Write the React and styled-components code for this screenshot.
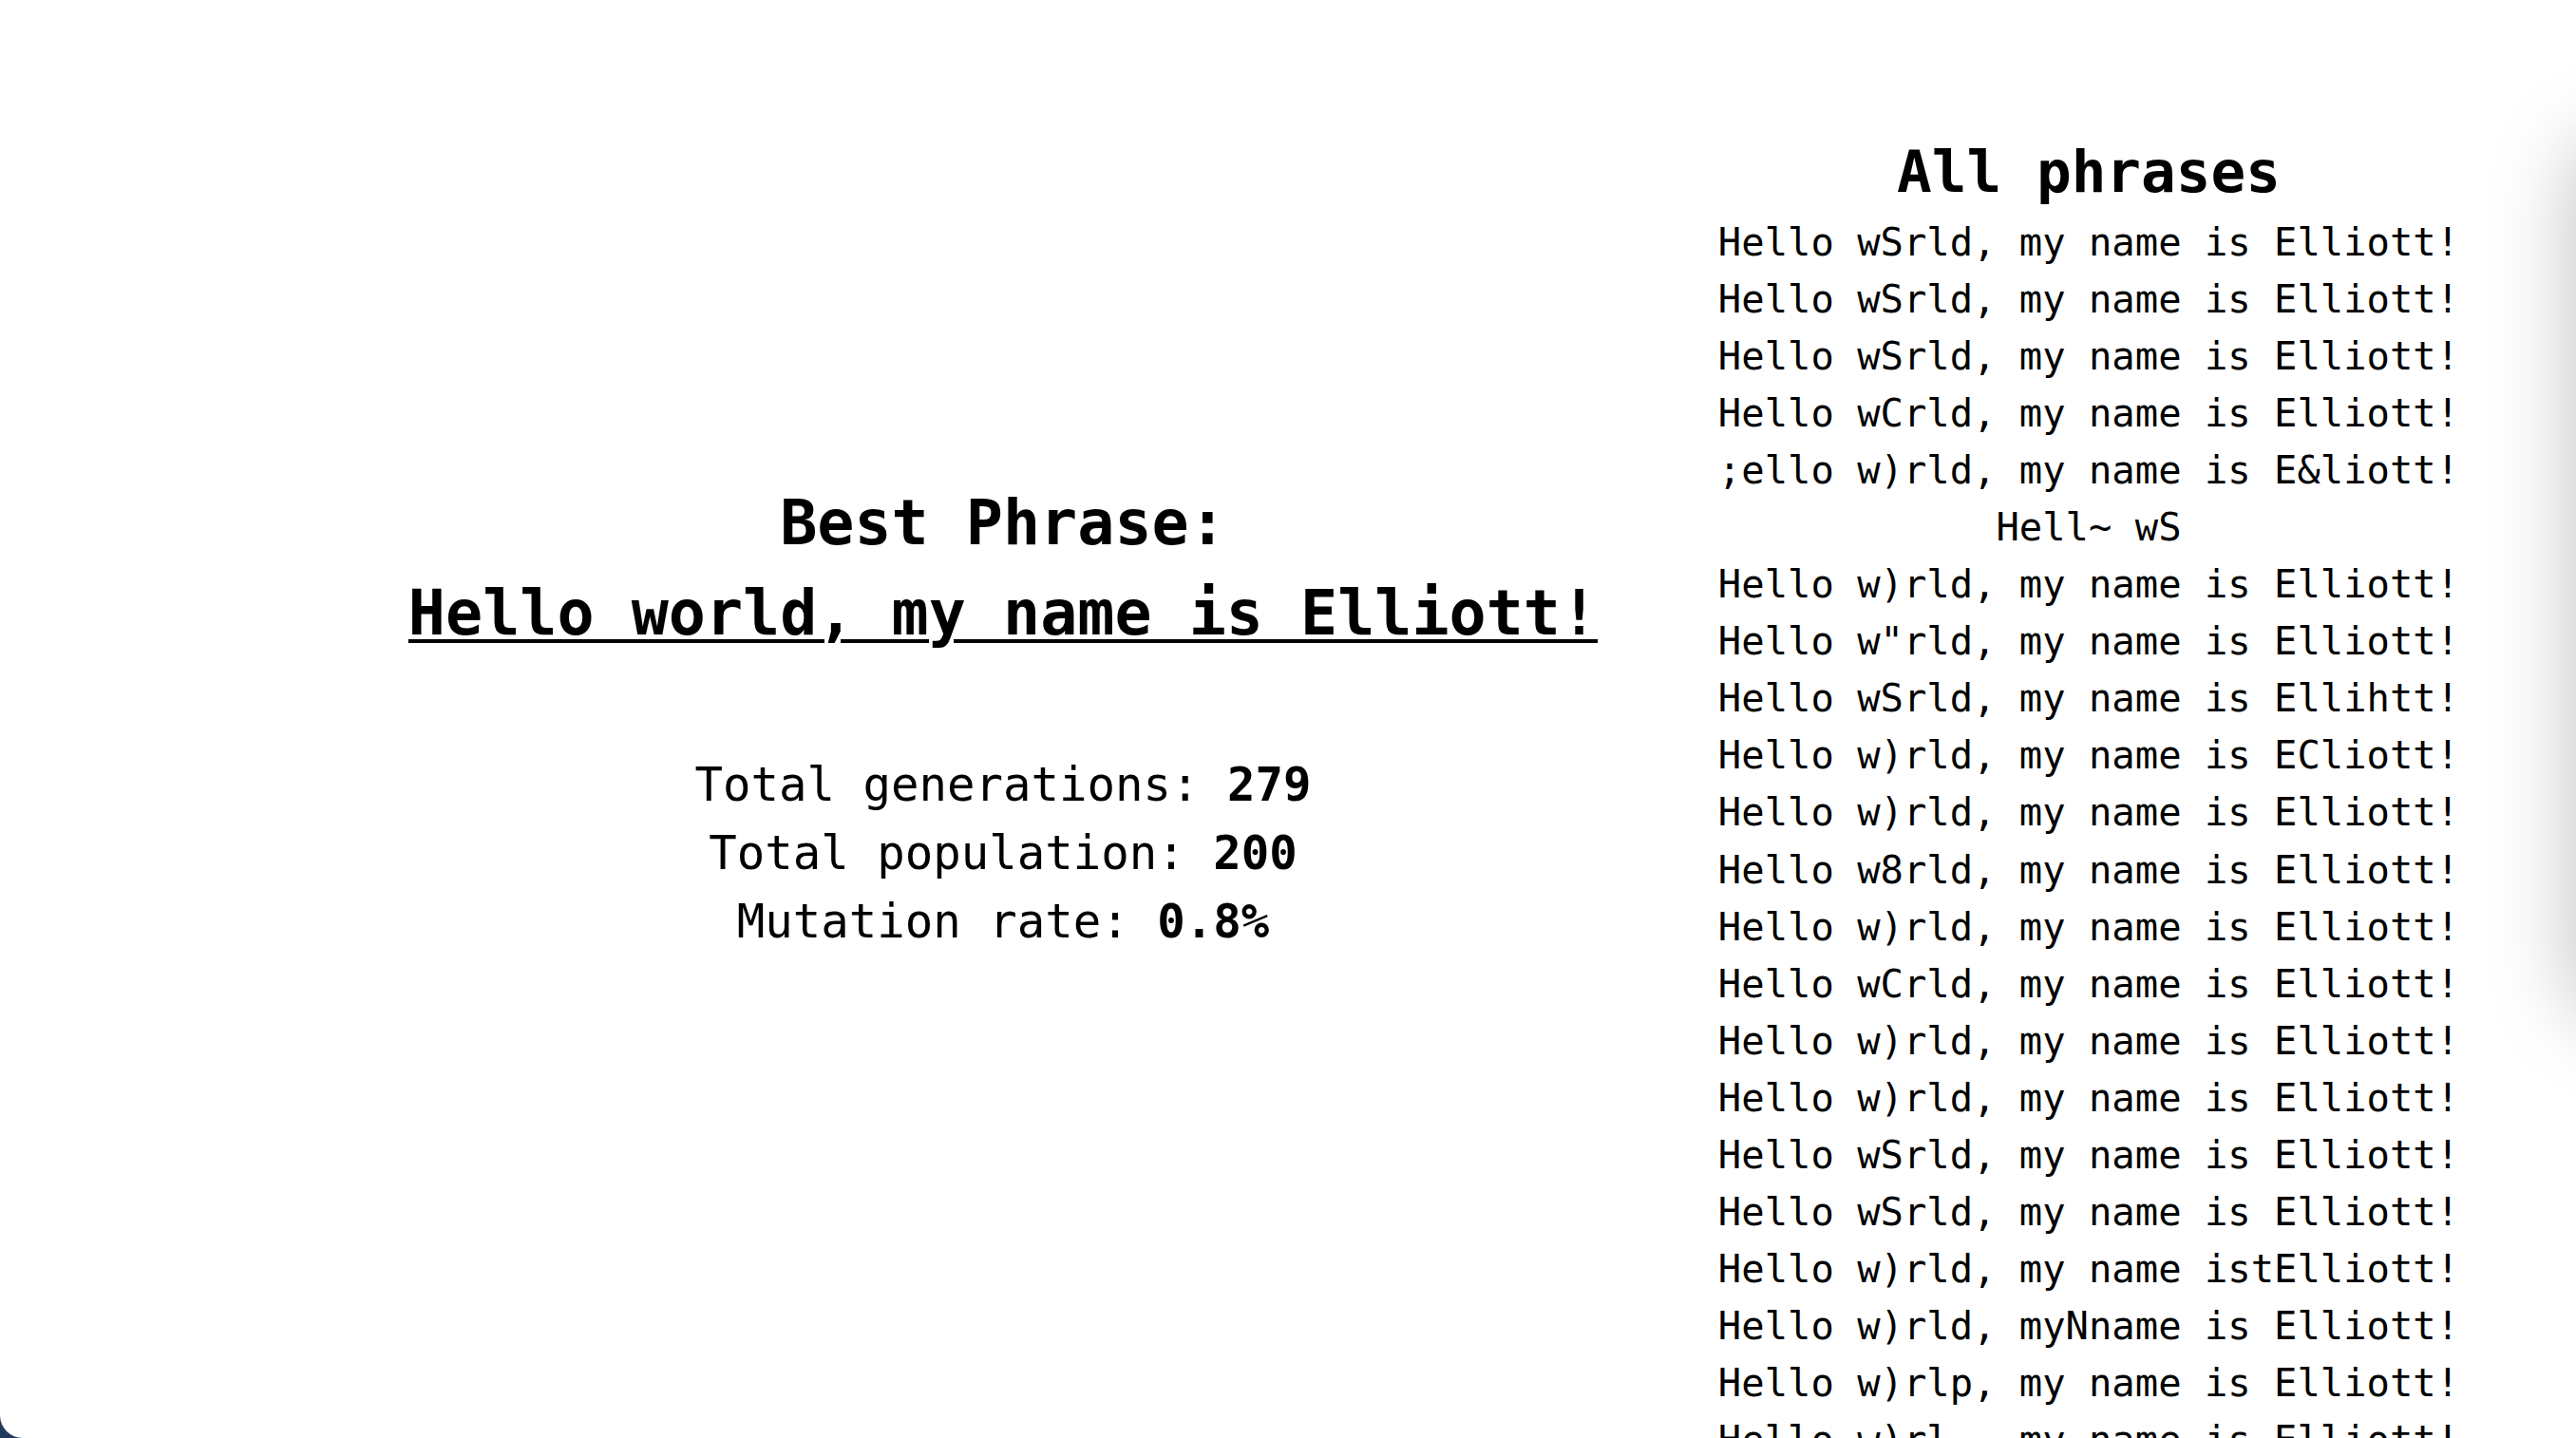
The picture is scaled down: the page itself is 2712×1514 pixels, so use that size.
import React from 'react'
import styled, { createGlobalStyle } from 'styled-components'

const GlobalStyle = createGlobalStyle`
  html, body {
    margin: 0;
    padding: 0;
    background: #203a5c;
    overflow: hidden;
  }
`

const Window = styled.div`
  position: relative;
  width: 100vw;
  height: 100vh;
  background: #fff;
  border-bottom-left-radius: 24px;
  overflow: hidden;
  display: grid;
  grid-template-columns: 1fr 826px;
  padding-right: 100px;
  box-sizing: border-box;
  color: #000;
  font-family: "DejaVu Sans Mono", "Liberation Mono", monospace;
`

const Summary = styled.section`
  display: flex;
  flex-direction: column;
  align-items: center;
  justify-content: center;
  padding-left: 326px;
  padding-bottom: 5px;
  text-align: center;
`

const Title = styled.h2`
  margin: 0;
  font-size: 65px;
  line-height: 95px;
  font-weight: 700;
  text-decoration: ${props => props.underline ? 'underline' : 'none'};
  text-decoration-thickness: 4px;
  text-underline-offset: 5px;
  white-space: pre;
`

const Stats = styled.div`
  margin-top: 98px;
  font-size: 49px;
  line-height: 72px;

  b {
    font-weight: 700;
  }
`

const Phrases = styled.section`
  display: flex;
  flex-direction: column;
  align-items: center;
  padding-top: 145px;
  overflow: hidden;
`

const PhrasesHeading = styled.h3`
  margin: 0 0 8px;
  font-size: 61px;
  line-height: 72px;
  font-weight: 700;
`

const Phrase = styled.div`
  font-size: 40.5px;
  line-height: 60.05px;
  white-space: pre;
  text-align: center;
`

const SideShadow = styled.div`
  position: absolute;
  left: 100%;
  top: 150px;
  width: 300px;
  height: 920px;
  border-radius: 40px;
  background: #fff;
  box-shadow: 0 0 90px rgba(0, 0, 0, 0.26);
`

const phrases = [
  'Hello wSrld, my name is Elliott!',
  'Hello wSrld, my name is Elliott!',
  'Hello wSrld, my name is Elliott!',
  'Hello wCrld, my name is Elliott!',
  ';ello w)rld, my name is E&liott!',
  'Hell~ wS',
  'Hello w)rld, my name is Elliott!',
  'Hello w"rld, my name is Elliott!',
  'Hello wSrld, my name is Ellihtt!',
  'Hello w)rld, my name is ECliott!',
  'Hello w)rld, my name is Elliott!',
  'Hello w8rld, my name is Elliott!',
  'Hello w)rld, my name is Elliott!',
  'Hello wCrld, my name is Elliott!',
  'Hello w)rld, my name is Elliott!',
  'Hello w)rld, my name is Elliott!',
  'Hello wSrld, my name is Elliott!',
  'Hello wSrld, my name is Elliott!',
  'Hello w)rld, my name istElliott!',
  'Hello w)rld, myNname is Elliott!',
  'Hello w)rlp, my name is Elliott!',
  'Hello w)rl., my name is Elliott!',
  'Hello w)rld, my name is Elliott!',
]

export default function App() {
  return (
    <>
      <GlobalStyle />
      <Window>
        <Summary>
          <Title>Best Phrase:</Title>
          <Title underline>Hello world, my name is Elliott!</Title>
          <Stats>
            <div>Total generations: <b>279</b></div>
            <div>Total population: <b>200</b></div>
            <div>Mutation rate: <b>0.8%</b></div>
          </Stats>
        </Summary>
        <Phrases>
          <PhrasesHeading>All phrases</PhrasesHeading>
          {phrases.map((p, i) => (
            <Phrase key={i}>{p}</Phrase>
          ))}
        </Phrases>
        <SideShadow />
      </Window>
    </>
  )
}
